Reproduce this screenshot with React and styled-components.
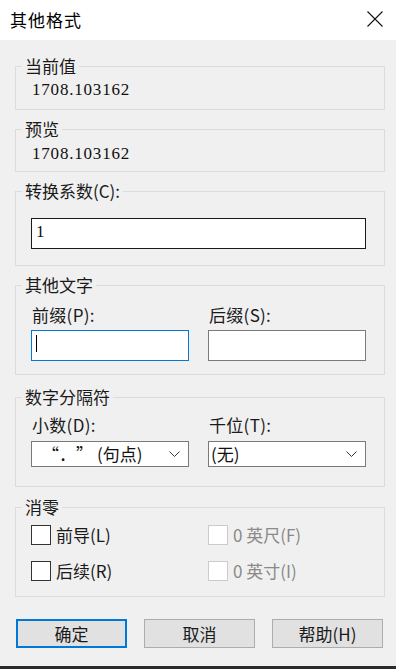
import React from "react";
import styled, { createGlobalStyle } from "styled-components";

const GlobalStyle = createGlobalStyle`
  html, body {
    margin: 0;
    padding: 0;
    background: #f0f0f0;
  }
  * {
    box-sizing: border-box;
  }
`;

export default function App() {
  return (
    <Window>
      <GlobalStyle />
      <TitleBar>
        <Title>其他格式</Title>
        <CloseButton aria-label="关闭">
          <svg width="16" height="16" viewBox="0 0 16 16">
            <path d="M0.5 0.5 L15.5 15.5 M15.5 0.5 L0.5 15.5" stroke="#111" strokeWidth="1.1" fill="none" />
          </svg>
        </CloseButton>
      </TitleBar>

      <Body>
        <Group $pt={6} $pb={10}>
          <Legend>当前值</Legend>
          <Value>1708.103162</Value>
        </Group>

        <Group $pt={7} $pb={8} $mt={10}>
          <Legend>预览</Legend>
          <Value>1708.103162</Value>
        </Group>

        <Group $pt={18} $pb={16} $mt={10}>
          <Legend>转换系数(C):</Legend>
          <TextBox $border="#1a1a1a" $wide>
            1
          </TextBox>
        </Group>

        <Group $pt={12} $pb={13} $mt={10}>
          <Legend>其他文字</Legend>
          <Columns>
            <Field>
              <Label>前缀(P):</Label>
              <TextBox $border="#0078d7">
                <Caret />
              </TextBox>
            </Field>
            <Field>
              <Label>后缀(S):</Label>
              <TextBox $border="#7a7a7a" />
            </Field>
          </Columns>
        </Group>

        <Group $pt={10} $pb={19} $mt={13}>
          <Legend>数字分隔符</Legend>
          <Columns>
            <Field $gap={7}>
              <Label>小数(D):</Label>
              <Select>
                <SelectText $indent={8}>
                  <Quote>“.”</Quote>(句点)
                </SelectText>
                <Chevron />
              </Select>
            </Field>
            <Field $gap={7}>
              <Label>千位(T):</Label>
              <Select>
                <SelectText>(无)</SelectText>
                <Chevron />
              </Select>
            </Field>
          </Columns>
        </Group>

        <Group $pt={9} $pb={16} $mt={11}>
          <Legend>消零</Legend>
          <CheckGrid>
            <Check>
              <Box />
              前导(L)
            </Check>
            <Check $disabled>
              <Box $disabled />0 英尺(F)
            </Check>
            <Check>
              <Box />
              后续(R)
            </Check>
            <Check $disabled>
              <Box $disabled />0 英寸(I)
            </Check>
          </CheckGrid>
        </Group>

        <ButtonRow>
          <Button $default>确定</Button>
          <Button>取消</Button>
          <Button>帮助(H)</Button>
        </ButtonRow>
      </Body>
      <BottomStrip />
    </Window>
  );
}

function Chevron() {
  return (
    <svg width="11" height="6" viewBox="0 0 11 6">
      <path d="M0.5 0.5 L5.5 5.5 L10.5 0.5" stroke="#333" strokeWidth="1" fill="none" />
    </svg>
  );
}

const Window = styled.div`
  height: 100vh;
  display: flex;
  flex-direction: column;
  font-family: "Liberation Serif", "Noto Sans CJK SC", serif;
  font-size: 17px;
  line-height: 18px;
  color: #111;
  background: #f0f0f0;
`;

const TitleBar = styled.div`
  height: 40px;
  background: #fff;
  display: flex;
  align-items: center;
  justify-content: space-between;
  padding: 0 13px 0 10px;
`;

const Title = styled.div`
  font-family: "Noto Sans CJK SC", sans-serif;
  font-size: 17px;
  letter-spacing: 1px;
  color: #000;
`;

const CloseButton = styled.div`
  width: 16px;
  height: 16px;
  display: flex;
  margin-top: -3px;
`;

const Body = styled.div`
  flex: 1;
  padding: 17px 11px 0 15px;
  display: flex;
  flex-direction: column;
`;

const Group = styled.fieldset`
  margin: ${(p) => p.$mt || 0}px 0 0 0;
  padding: ${(p) => p.$pt}px 17px ${(p) => p.$pb}px 15px;
  border: 1px solid #dcdcdc;
  min-width: 0;
`;

const Legend = styled.legend`
  margin-left: -9px;
  padding: 0 3px;
  font-family: "Noto Sans CJK SC", sans-serif;
  font-size: 17px;
  line-height: 18px;
  color: #1a1a1a;
`;

const Value = styled.div`
  padding-left: 1px;
  font-size: 17px;
  letter-spacing: 0.8px;
  color: #111;
`;

const Columns = styled.div`
  display: grid;
  grid-template-columns: 158px 158px;
  column-gap: 19px;
`;

const Field = styled.div`
  display: flex;
  flex-direction: column;
  gap: ${(p) => p.$gap || 6}px;
`;

const Label = styled.div`
  padding-left: 1px;
  font-family: "Noto Sans CJK SC", sans-serif;
  font-size: 17px;
  letter-spacing: 0.3px;
  color: #1a1a1a;
`;

const TextBox = styled.div`
  width: ${(p) => (p.$wide ? 335 : 158)}px;
  height: 31px;
  background: #fff;
  border: 1px solid ${(p) => p.$border};
  display: flex;
  align-items: flex-start;
  padding: 4px 0 0 4px;
  font-size: 17px;
`;

const Caret = styled.span`
  display: block;
  width: 1px;
  height: 17px;
  background: #000;
`;

const Select = styled.div`
  height: 26px;
  background: #fff;
  border: 1px solid #7a7a7a;
  display: flex;
  align-items: center;
  justify-content: space-between;
  padding: 0 8px 0 2px;
`;

const SelectText = styled.span`
  padding-left: ${(p) => p.$indent || 0}px;
  font-family: "Noto Sans CJK SC", sans-serif;
  font-size: 17px;
  color: #111;
`;

const Quote = styled.span`
  font-feature-settings: "fwid";
  margin-right: 4px;
`;

const CheckGrid = styled.div`
  display: grid;
  grid-template-columns: 177px 1fr;
  row-gap: 17px;
`;

const Check = styled.label`
  display: flex;
  align-items: center;
  gap: 5px;
  height: 19px;
  font-family: "Noto Sans CJK SC", sans-serif;
  font-size: 17px;
  color: ${(p) => (p.$disabled ? "#8a8a8a" : "#1a1a1a")};
`;

const Box = styled.span`
  width: 20px;
  height: 20px;
  background: #fff;
  border: 1px solid ${(p) => (p.$disabled ? "#cccccc" : "#333")};
  flex-shrink: 0;
`;

const ButtonRow = styled.div`
  display: flex;
  justify-content: space-between;
  margin: 22px 2px 0 1px;
`;

const Button = styled.div`
  width: 111px;
  height: 29px;
  display: flex;
  align-items: center;
  justify-content: center;
  background: #e1e1e1;
  border: ${(p) => (p.$default ? "2px solid #0078d7" : "1px solid #adadad")};
  font-family: "Noto Sans CJK SC", sans-serif;
  font-size: 17px;
  color: #1a1a1a;
`;

const BottomStrip = styled.div`
  height: 3px;
  background: #2b2b2b;
`;
